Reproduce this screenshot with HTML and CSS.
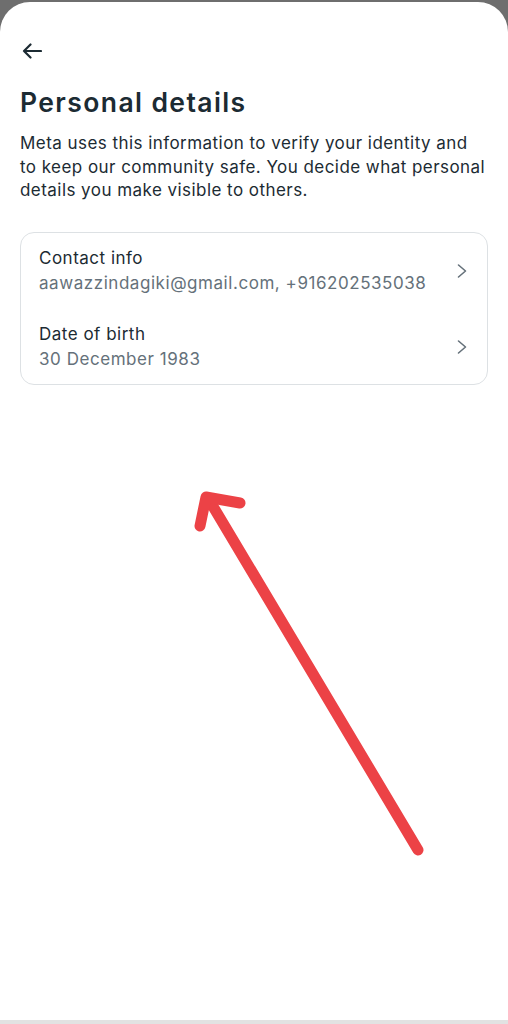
FILE: index.html
```html
<!DOCTYPE html>
<html lang="en">
<head>
<meta charset="utf-8">
<title>Personal details</title>
<link rel="stylesheet" href="styles.css">
</head>
<body>
<div class="sheet">
  <header class="topbar">
    <svg class="back" width="20" height="16" viewBox="0 0 20 16" aria-hidden="true">
      <path d="M19 8H2M8.5 1.5L2 8l6.5 6.5" fill="none" stroke="#1c2b33" stroke-width="2.2" stroke-linecap="round" stroke-linejoin="round"/>
    </svg>
  </header>
  <h1 class="title">Personal details</h1>
  <p class="intro">Meta uses this information to verify your identity and to keep our community safe. You decide what personal details you make visible to others.</p>
  <div class="card">
    <div class="row">
      <div class="row-text">
        <div class="label">Contact info</div>
        <div class="value">aawazzindagiki@gmail.com, +916202535038</div>
      </div>
      <svg class="chev" width="10" height="16" viewBox="0 0 10 16" aria-hidden="true"><path d="M1.5 2l7 6-7 6" fill="none" stroke="#65717a" stroke-width="1.6" stroke-linecap="round" stroke-linejoin="round"/></svg>
    </div>
    <div class="row">
      <div class="row-text">
        <div class="label">Date of birth</div>
        <div class="value">30 December 1983</div>
      </div>
      <svg class="chev" width="10" height="16" viewBox="0 0 10 16" aria-hidden="true"><path d="M1.5 2l7 6-7 6" fill="none" stroke="#65717a" stroke-width="1.6" stroke-linecap="round" stroke-linejoin="round"/></svg>
    </div>
  </div>
  <svg class="annot" width="508" height="1024" viewBox="0 0 508 1024" aria-hidden="true">
    <g fill="none" stroke="#ec4246" stroke-width="11" stroke-linecap="round" stroke-linejoin="round">
      <path d="M418 850L208 498"/>
      <path d="M200 526L206 497L240 503"/>
    </g>
  </svg>
</div>
<div class="bottom"></div>
</body>
</html>
```
FILE: styles.css
```css
html, body {
  margin: 0;
  padding: 0;
}
body {
  background: #6e6e6e;
  font-family: Inter, Roboto, "Noto Sans", sans-serif;
  color: #1c2b33;
  width: 508px;
  height: 1024px;
  overflow: hidden;
}
.sheet {
  position: relative;
  margin-top: 2px;
  height: 1018px;
  background: #ffffff;
  border-radius: 30px 30px 0 0;
  padding: 0 20px;
  box-sizing: border-box;
  display: flex;
  flex-direction: column;
}
.topbar {
  height: 42px;
  padding-top: 41px;
  box-sizing: border-box;
  display: flex;
  align-items: flex-start;
}
.back {
  display: block;
  margin-left: 2px;
}
.title {
  margin: 41px 0 0;
  font-size: 26.5px;
  line-height: 34px;
  font-weight: 600;
  letter-spacing: 1.4px;
  color: #1c2b33;
}
.intro {
  margin: 13px 0 0;
  font-size: 17px;
  line-height: 23.5px;
  letter-spacing: 0.45px;
  color: #1c2b33;
}
.card {
  margin-top: 29px;
  border: 1px solid #dde1e4;
  border-radius: 14px;
  padding: 10px 0 8px;
  display: flex;
  flex-direction: column;
}
.row {
  display: flex;
  align-items: center;
  padding: 4px 20px 5px 18px;
}
.row + .row {
  margin-top: 19px;
}
.row-text {
  flex: 1;
  display: flex;
  flex-direction: column;
  gap: 2px;
}
.label {
  font-size: 17px;
  line-height: 23px;
  letter-spacing: 0.5px;
  color: #1c2b33;
}
.value {
  font-size: 17px;
  line-height: 23px;
  letter-spacing: 0.55px;
  color: #65717a;
}
.chev {
  display: block;
}
.annot {
  position: absolute;
  left: 0;
  top: -2px;
  pointer-events: none;
}
.bottom {
  height: 4px;
  background: #e2e2e2;
}
```
